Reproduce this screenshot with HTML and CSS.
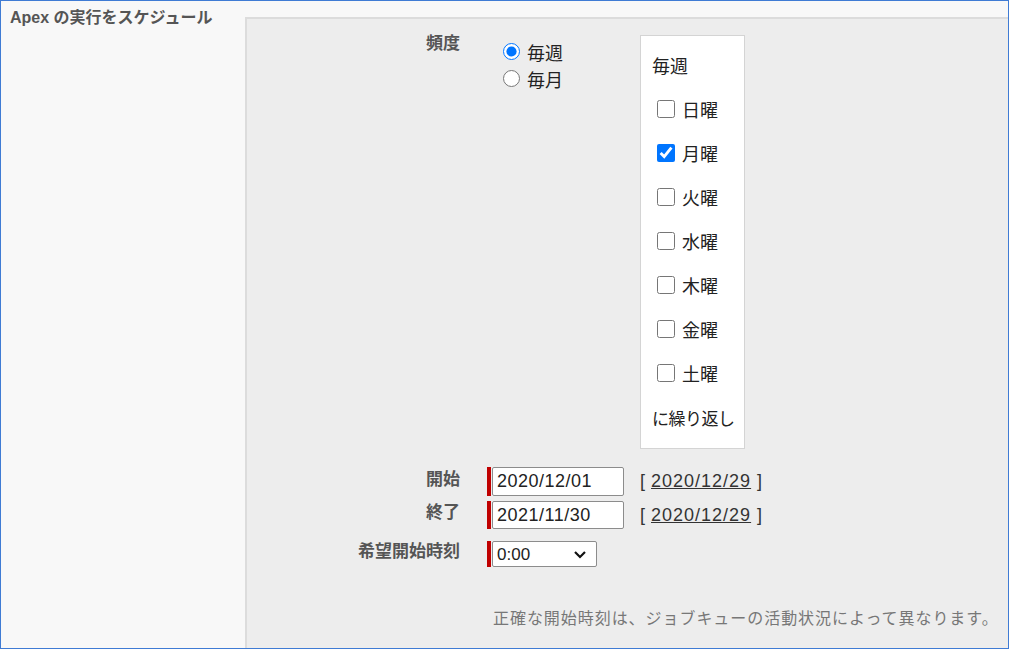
FILE: index.html
```html
<!DOCTYPE html>
<html lang="ja">
<head>
    <meta charset="UTF-8">
    <title>Apex の実行をスケジュール</title>
    <link rel="stylesheet" href="styles.css">
</head>
<body>

    <div class="side">
        <h2 class="title">Apex の実行をスケジュール</h2>
    </div>

    <div class="panel">
        <div class="row freqRow">
            <div class="lbl">頻度</div>
            <div class="radios">
                <label class="radioLine"><input type="radio" name="freq" checked>毎週</label>
                <label class="radioLine"><input type="radio" name="freq">毎月</label>
            </div>
            <div class="weekBox">
                <div class="boxLine">毎週</div>
                <label class="boxLine"><input type="checkbox">日曜</label>
                <label class="boxLine"><input type="checkbox" checked>月曜</label>
                <label class="boxLine"><input type="checkbox">火曜</label>
                <label class="boxLine"><input type="checkbox">水曜</label>
                <label class="boxLine"><input type="checkbox">木曜</label>
                <label class="boxLine"><input type="checkbox">金曜</label>
                <label class="boxLine"><input type="checkbox">土曜</label>
                <div class="boxLine repeat">に繰り返し</div>
            </div>
        </div>

        <div class="row dateRow startRow">
            <div class="lbl">開始</div>
            <div class="required">
                <span class="reqBar"></span>
                <input type="text" class="dateInput" value="2020/12/01">
            </div>
            <span class="today">[ <a href="#">2020/12/29</a> ]</span>
        </div>

        <div class="row dateRow endRow">
            <div class="lbl">終了</div>
            <div class="required">
                <span class="reqBar"></span>
                <input type="text" class="dateInput short" value="2021/11/30">
            </div>
            <span class="today">[ <a href="#">2020/12/29</a> ]</span>
        </div>

        <div class="row timeRow">
            <div class="lbl">希望開始時刻</div>
            <div class="required">
                <span class="reqBar short"></span>
                <div class="selectWrap">
                    <select class="timeSelect">
                        <option>0:00</option>
                        <option>1:00</option>
                        <option>2:00</option>
                    </select>
                    <svg class="chev" width="14" height="10" viewBox="0 0 14 10">
                        <path d="M2 3 L7 8 L12 3" fill="none" stroke="#111" stroke-width="2.2"/>
                    </svg>
                </div>
            </div>
        </div>

        <div class="row noteRow">
            <div class="lbl"></div>
            <p class="note">正確な開始時刻は、ジョブキューの活動状況によって異なります。</p>
        </div>
    </div>

</body>
</html>
```

FILE: styles.css
```css
html, body {
    margin: 0;
    padding: 0;
}

body {
    display: flex;
    width: 1009px;
    height: 649px;
    box-sizing: border-box;
    border: 1px solid #3f7bd4;
    background-color: #f8f8f8;
    font-family: "Liberation Sans", "Noto Sans CJK JP", sans-serif;
    color: #222;
    overflow: hidden;
}

.side {
    width: 244px;
    flex-shrink: 0;
}

.title {
    margin: 0;
    padding: 7px 0 0 9px;
    font-size: 16px;
    line-height: 20px;
    font-weight: bold;
    color: #555;
}

.panel {
    flex: 1;
    margin-top: 16px;
    padding-top: 16px;
    background-color: #ededed;
    border-top: 2px solid #dcdcdc;
    border-left: 2px solid #dcdcdc;
}

.row {
    display: flex;
    align-items: flex-start;
}

.lbl {
    width: 213px;
    margin-right: 27px;
    flex-shrink: 0;
    text-align: right;
    font-size: 17px;
    line-height: 18px;
    font-weight: bold;
    color: #555;
}

/* frequency */
.radios {
    width: 153px;
    margin-top: 3px;
    padding-left: 16px;
    box-sizing: border-box;
}

.radioLine {
    display: flex;
    align-items: center;
    height: 27px;
    font-size: 18px;
}

.radioLine input {
    width: 17px;
    height: 17px;
    margin: 0 7px 0 0;
}

.weekBox {
    width: 105px;
    box-sizing: border-box;
    padding: 7px 11px 9px 11px;
    background-color: #fff;
    border: 1px solid #d4d4d4;
}

.boxLine {
    display: flex;
    align-items: center;
    height: 44px;
    font-size: 18px;
    white-space: nowrap;
}

.boxLine.repeat {
    font-size: 17px;
    letter-spacing: -0.5px;
}

.boxLine input {
    width: 18px;
    height: 18px;
    margin: 0 7px 0 5px;
}

/* dates */
.dateRow {
    align-items: center;
}

.startRow {
    margin-top: 18px;
}

.endRow {
    margin-top: 5px;
}

.dateRow .lbl {
    margin-top: -4px;
}

.required {
    display: flex;
    gap: 1px;
}

.reqBar {
    width: 4px;
    background-color: #c00000;
}

.dateInput {
    width: 132px;
    height: 29px;
    box-sizing: border-box;
    margin: 0;
    padding: 0 4px;
    border: 1px solid #8c8c8c;
    border-radius: 2px;
    background: #fff;
    font-family: "Liberation Sans", sans-serif;
    font-size: 18px;
    letter-spacing: 0.5px;
    color: #222;
}

.dateInput.short {
    height: 28px;
}

.today {
    margin-left: 16px;
    font-size: 18px;
    color: #333;
    word-spacing: 1px;
}

.today a {
    color: #333;
    letter-spacing: 1px;
}

/* time */
.timeRow {
    margin-top: 12px;
    align-items: center;
}

.timeRow .lbl {
    margin-top: -5px;
}

.selectWrap {
    position: relative;
}

.timeSelect {
    appearance: none;
    width: 105px;
    height: 26px;
    box-sizing: border-box;
    margin: 0;
    padding: 0 4px;
    border: 1px solid #8c8c8c;
    border-radius: 2px;
    background: #fff;
    font-family: "Liberation Sans", sans-serif;
    font-size: 17px;
    color: #222;
}

.chev {
    position: absolute;
    right: 10px;
    top: 8px;
    pointer-events: none;
}

/* note */
.noteRow {
    margin-top: 38px;
}

.note {
    margin: 0 0 0 6px;
    font-family: "Noto Sans CJK JP", sans-serif;
    font-size: 16px;
    line-height: 24px;
    letter-spacing: 0.95px;
    color: #777;
}
```
